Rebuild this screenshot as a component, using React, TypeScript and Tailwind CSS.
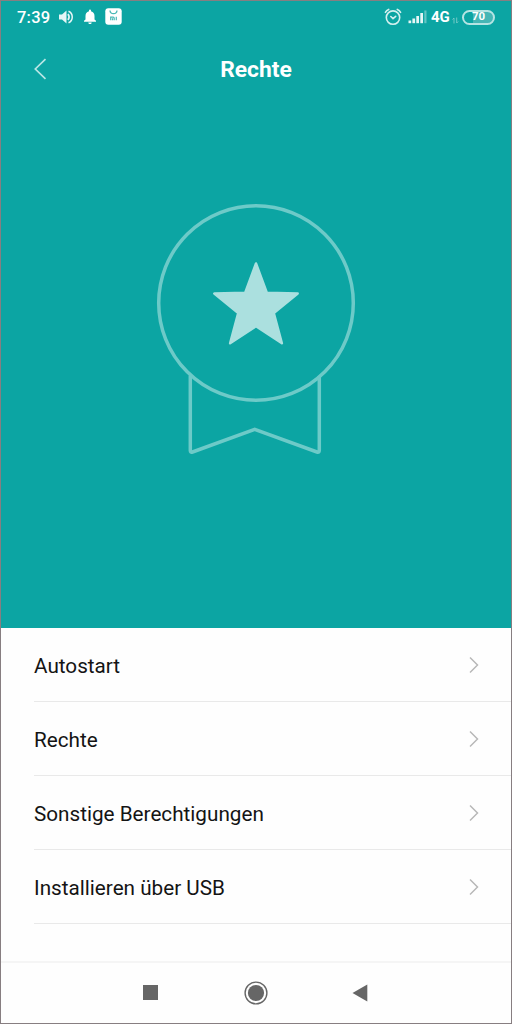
const items = ['Autostart', 'Rechte', 'Sonstige Berechtigungen', 'Installieren über USB'];

function StatusBar() {
  return (
    <div className="flex h-8 items-center pl-4 pr-4 text-white">
      <span className="w-[41px] pt-px text-[16.5px] leading-8 font-medium tracking-[0.2px]">7:39</span>
      <svg className="h-4 w-4" viewBox="0 0 16 16" fill="none">
        <path d="M1 5.500h3L8.500 1.500v13L4 10.500H1z" fill="#e6f6f6" />
        <path d="M10 5q2.200 3 0 6" stroke="#e6f6f6" strokeWidth="1.700" />
        <path d="M10.500 2.200c5 2.200 5 9.400 0 11.600" stroke="#e6f6f6" strokeWidth="1.500" />
      </svg>
      <svg className="ml-2 h-4 w-4" viewBox="0 0 16 16" fill="#fff">
        <path d="M7 2.200V1.500a.9.900 0 0 1 2 0v.7c2.400.6 3.500 2.400 3.500 4.800v3.500l1.500 1.300v.900H2v-.9l1.500-1.300V7c0-2.400 1.100-4.200 3.500-4.800zM6.300 13.400h3.400c0 2-3.400 2-3.400 0z" />
      </svg>
      <svg className="mb-px ml-[7px] h-[17px] w-[17px]" viewBox="0 0 17 17" fill="none">
        <rect x="0.300" y="0.300" width="16.400" height="16.400" rx="3" fill="#fff" />
        <path d="M5 2.500c.3 4.200 6.700 4.200 7 0" stroke="#4ab9b7" strokeWidth="1.300" />
        <path d="M5.700 12.300V9.200h2.500c.7 0 1 .3 1 1v2.100M7.500 10.300v2M11.300 8.700v3.600" stroke="#4ab9b7" strokeWidth="1.200" />
      </svg>

      <svg className="ml-auto h-[18px] w-[18px]" viewBox="0 0 18 18" fill="none" stroke="#d4f0ef" strokeWidth="1.600" strokeLinecap="round">
        <circle cx="9" cy="9.600" r="6.700" />
        <path d="M1.400 4.300Q2.500 2.300 4.700 1.400M16.600 4.300Q15.500 2.300 13.300 1.400M6.800 8.500L9 10.600l2.700-2.300" />
      </svg>
      <svg className="ml-[6px] h-[14px] w-[19px]" viewBox="0 0 19 14" fill="#e6f6f6">
        <rect x="0.500" y="10.500" width="2.700" height="2.700" />
        <rect x="4.400" y="8.500" width="2.700" height="4.700" />
        <rect x="8.300" y="6" width="2.700" height="7.200" />
        <rect x="12.300" y="3" width="2.700" height="10.200" />
        <rect x="16.300" y="0.500" width="2.200" height="12.700" opacity="0.400" />
      </svg>
      <span className="ml-[4px] w-[20px] text-[15px] leading-8 font-bold">4G</span>
      <svg className="ml-px mt-[6px] h-[7px] w-[7px]" viewBox="0 0 7 7" fill="none" stroke="#7accca" strokeWidth="0.900">
        <path d="M2 6.500V1L.5 2.500M4.700.5V6l1.500-1.500" />
      </svg>
      <div className="ml-[3px] flex h-[15px] w-[33px] items-center justify-center rounded-full border-2 border-[#b5e4e3] bg-linear-to-r from-[#0ca5a3] from-30% to-[#46b6b5] to-30% text-[11.5px] leading-none font-bold">
        70
      </div>
    </div>
  );
}

function Medal() {
  return (
    <svg className="h-[256px] w-[202px]" viewBox="155 201 202 256" fill="none">
      <g stroke="#6dcac8" strokeWidth="3.500">
        <circle cx="256" cy="303" r="97.300" />
        <path d="M190.300 375.500V450.500Q190.300 452.800 192.500 452L254.700 429.300L317 452Q319.300 452.800 319.300 450.500V376.500" />
      </g>
      <path
        d="M256 263.500L266.800 292.700L297.700 293.500L273.800 313L281.900 343.200L256 326.200L230.100 343.200L238.200 313L214.300 293.500L245.200 292.700Z"
        fill="#abe0df"
        stroke="#abe0df"
        strokeWidth="2.500"
        strokeLinejoin="round"
      />
    </svg>
  );
}

export default function App() {
  return (
    <div className="flex h-[1024px] w-[512px] flex-col border border-[#877e81] bg-[#fefefe] font-[Roboto,sans-serif]">
      <header className="flex h-[627px] flex-col bg-[#0ca5a3]">
        <StatusBar />
        <div className="grid h-[72px] grid-cols-3 items-center px-8">
          <svg className="h-6 w-4" viewBox="0 0 16 24" fill="none" stroke="#b9e6e5" strokeWidth="1.700">
            <path d="M12.500 2.200L2.300 12l10.200 9.800" />
          </svg>
          <h1 className="pt-0.5 text-center text-[22.800px] font-bold text-white">Rechte</h1>
        </div>
        <div className="flex justify-center pt-[96px]">
          <Medal />
        </div>
      </header>

      <main className="flex-1">
        {items.map((item) => (
          <div key={item} className="ml-[33px] flex h-[74px] items-center justify-between border-b border-[#e9e9e9] pr-8">
            <span className="pt-1 text-[20.700px] text-[#141414]">{item}</span>
            <svg className="h-[18px] w-[10px]" viewBox="0 0 10 18" fill="none" stroke="#b8b8b8" strokeWidth="1.500">
              <path d="M1 1.500L8.500 9L1 16.500" />
            </svg>
          </div>
        ))}
      </main>

      <nav className="flex h-[62px] items-center border-t-2 border-[#f5f5f5] pb-px pl-[142px]">
        <div className="h-[15px] w-[15px] bg-[#666]" />
        <svg className="ml-[86px] h-6 w-6" viewBox="0 0 24 24">
          <circle cx="12" cy="12" r="10.900" fill="none" stroke="#666" strokeWidth="1.400" />
          <circle cx="12" cy="12" r="8.100" fill="#666" />
        </svg>
        <svg className="ml-[84px] h-[18px] w-4" viewBox="0 0 16 18" fill="#666">
          <path d="M15.300.5v17L.5 9z" />
        </svg>
      </nav>
    </div>
  );
}
